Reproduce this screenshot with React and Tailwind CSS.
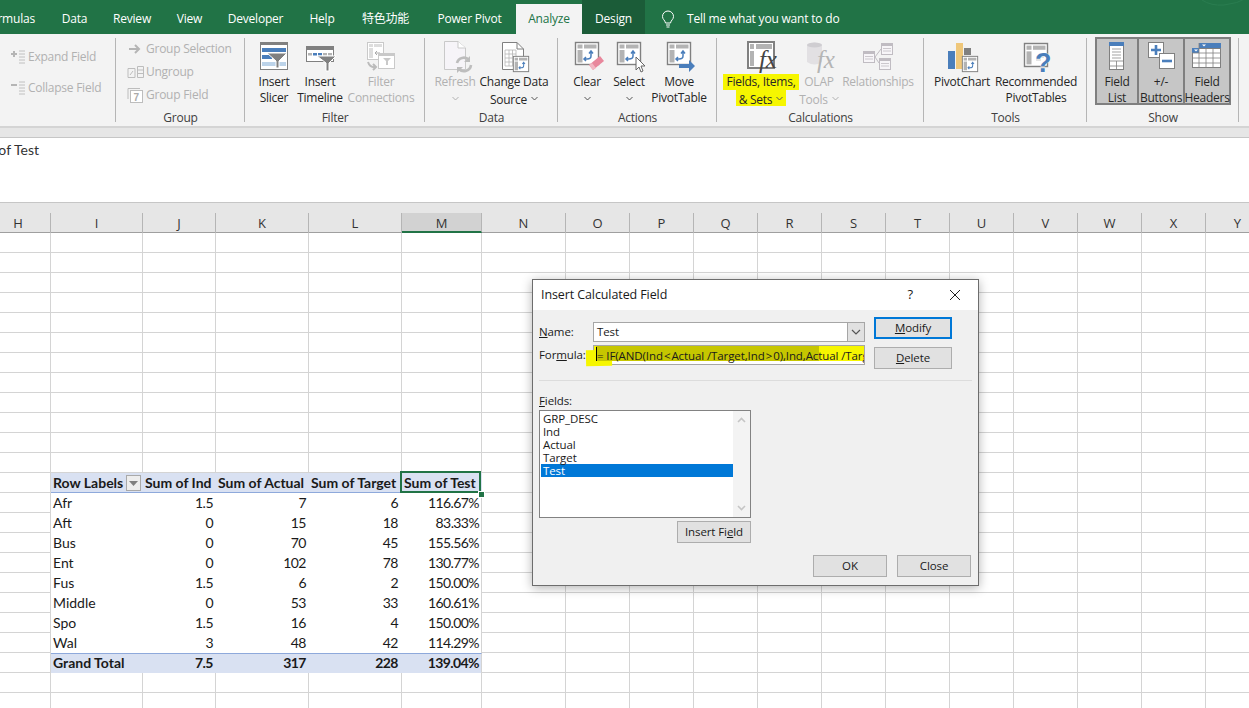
import React from "react";

const G = "#808080";
const L = "#c9c9c9";
const B = "#4a7ebb";

const Chevron = ({ c = "#666" }) => (
  <svg width="7" height="5" viewBox="0 0 7 5" className="inline-block">
    <path d="M0.5 1 L3.5 4 L6.5 1" fill="none" stroke={c} strokeWidth="1" />
  </svg>
);

// little pivot table picture with the blue swap arrows
const PT = ({ x, y, w = 24, h = 23, c = G, arrows = true }) => (
  <g transform={`translate(${x} ${y}) scale(${w / 24} ${h / 23})`}>
    <rect x="0.5" y="0.5" width="23" height="22" fill="#fff" stroke={c} strokeWidth="1.4" />
    <rect x="2.5" y="2.5" width="5" height="4" fill="#b3b3b3" />
    <rect x="9" y="2.5" width="12.5" height="4" fill="#b3b3b3" />
    <rect x="2.5" y="8" width="5" height="12.5" fill="#b3b3b3" />
    {arrows && <path d="M16 10 V14 Q16 17 12 17 H9 M14 11.5 L16 9 L18 11.5 M11 15 L9 17 L11 19" fill="none" stroke={B} strokeWidth="1.5" />}
  </g>
);

const Funnel = ({ d }) => <path d={d} fill={G} stroke="#fff" strokeWidth="1" />;

const Ico = ({ children }) => (
  <svg width="32" height="33" viewBox="0 0 32 33" className="overflow-visible">
    {children}
  </svg>
);

const SlicerIcon = () => (
  <Ico>
    <rect x="2.5" y="1.5" width="27" height="27" fill="#fff" stroke={G} />
    <rect x="2" y="1" width="28" height="3" fill={G} />
    <rect x="4" y="7" width="24" height="4" fill={B} />
    <rect x="4" y="14" width="10" height="4" fill={B} />
    <rect x="4" y="21" width="24" height="4" fill="#bcd3e9" />
    <Funnel d="M9 12 H29 L21 20 V27 H18 V20 Z" />
  </Ico>
);

const TimelineIcon = () => (
  <Ico>
    <rect x="2.5" y="5.5" width="27" height="15" fill="#fff" stroke={G} />
    <rect x="2" y="5" width="28" height="4" fill={G} />
    <rect x="4" y="12" width="4" height="2.5" fill="#b3b3b3" />
    <rect x="9" y="12" width="4" height="2.5" fill={B} />
    <rect x="14" y="12" width="4" height="2.5" fill={B} />
    <rect x="19" y="12" width="4" height="2.5" fill="#b3b3b3" />
    <rect x="24" y="12" width="4" height="2.5" fill="#b3b3b3" />
    <Funnel d="M13 15 H32 L25 22 V30 H22 V22 Z" />
  </Ico>
);

const ConnIcon = () => (
  <Ico>
    <rect x="2.5" y="1.5" width="16" height="17" fill="#fff" stroke={L} />
    <rect x="4" y="3" width="4" height="3" fill="#ddd" />
    <rect x="9" y="3" width="8" height="3" fill="#ddd" />
    <rect x="4" y="7" width="4" height="10" fill="#ddd" />
    <path d="M10 12 H15 M12 10 L10 12 L12 14" fill="none" stroke="#aaa" strokeWidth="1" />
    <rect x="13.5" y="12.5" width="16" height="15" fill="#fff" stroke={L} />
    <rect x="13" y="12" width="17" height="3" fill={L} />
    <path d="M18 17 H26 L23 20 V24 H21 V20 Z" fill={L} />
    <path d="M3 21 Q5 27 11 26 M8 23 L11 26 L8 29" fill="none" stroke="#bbb" strokeWidth="2" />
  </Ico>
);

const RefreshIcon = () => (
  <Ico>
    <path d="M5.5 0.5 H19 L26.5 7 V28.5 H5.5 Z" fill="#f6f4f8" stroke={L} />
    <path d="M19 0.5 V7 H26.5" fill="#fff" stroke={L} />
    <path d="M18 22 A7 7 0 0 1 30 19 M32 24 A7 7 0 0 1 20 28" fill="none" stroke="#bdbdbd" strokeWidth="2.6" />
    <path d="M31 15 V21 H25 Z M18 32 V26 H24 Z" fill="#bdbdbd" />
  </Ico>
);

const ChangeIcon = () => (
  <Ico>
    <path d="M4.5 1.5 H19 L25.5 8 V28.5 H4.5 Z" fill="#fff" stroke={G} />
    <path d="M19 1.5 V8 H25.5" fill="none" stroke={G} />
    <path d="M7 9 H18 V25 H7 Z M7 13 H18 M7 17 H18 M7 21 H18 M11 9 V25 M14.5 9 V25" fill="none" stroke="#b5b5b5" strokeWidth="0.8" />
    <PT x={15} y={15} w={16} h={16} />
  </Ico>
);

const ClearIcon = () => (
  <Ico>
    <PT x={4} y={1} />
    <path d="M18 24 L29 15 L33 20 L22 29 Z" fill="#e8879c" />
    <path d="M18 24 L22 29 L25 27 L21 22 Z" fill="#f2b6c2" />
  </Ico>
);

const SelectIcon = () => (
  <Ico>
    <PT x={4} y={1} />
    <path d="M23 16 V29 L26 26 L28 31 L30 30 L28 25 L32 25 Z" fill="#fff" stroke="#666" strokeWidth="1" />
  </Ico>
);

const MoveIcon = () => (
  <Ico>
    <PT x={4} y={1} />
    <path d="M16 23 H26 V19 L32 25 L26 31 V27 H16 Z" fill={B} />
  </Ico>
);

const FieldsIcon = () => (
  <Ico>
    <rect x="3" y="1" width="26" height="26" fill="#fff" stroke={G} strokeWidth="2" />
    <rect x="5" y="3" width="4" height="5" fill="#b3b3b3" />
    <rect x="11" y="3" width="16" height="5" fill="#b3b3b3" />
    <rect x="5" y="10" width="4" height="15" fill="#b3b3b3" />
    <text x="14" y="27" fontFamily="'Liberation Serif', serif" fontStyle="italic" fontSize="25" fill="#444">fx</text>
  </Ico>
);

const OlapIcon = () => (
  <Ico>
    <path d="M4 4 Q11.5 -1 19 4 V21 Q11.5 26 4 21 Z" fill="#e2e0e3" />
    <ellipse cx="11.5" cy="4" rx="7.5" ry="2.5" fill="#cfcdd1" />
    <text x="14" y="27" fontFamily="'Liberation Serif', serif" fontStyle="italic" fontSize="25" fill="#b5b5b5">fx</text>
  </Ico>
);

const RelBox = ({ x, y }) => (
  <g>
    <rect x={x + 0.5} y={y + 0.5} width="11" height="11" fill="#f7f5f8" stroke="#c0bcc2" />
    <rect x={x} y={y} width="12" height="3" fill="#c0bcc2" />
    <path d={`M${x + 2} ${y + 5.5} H${x + 10} M${x + 2} ${y + 8} H${x + 10}`} stroke="#c0bcc2" strokeWidth="0.8" />
  </g>
);

const RelIcon = () => (
  <Ico>
    <path d="M13 16 L19 8 M13 16 L17 22" stroke="#c0bcc2" fill="none" />
    <RelBox x={1} y={10} />
    <RelBox x={19} y={2} />
    <RelBox x={17} y={17} />
  </Ico>
);

const ChartIcon = () => (
  <Ico>
    <rect x="2" y="10" width="7" height="18" fill={B} />
    <rect x="10" y="2" width="7" height="26" fill="#efc77a" />
    <rect x="18" y="7" width="7" height="7" fill={G} />
    <PT x={16} y={15} w={16} h={16} />
  </Ico>
);

const RecIcon = () => (
  <Ico>
    <PT x={4} y={2} h={24} arrows={false} />
    <path d="M16 16 H24 M16 19 H21" stroke="#c9c9c9" strokeWidth="1" />
    <text x="15" y="31" fontFamily="'Liberation Sans', sans-serif" fontWeight="700" fontSize="27" fill={B} stroke="#fff" strokeWidth="0.6" paintOrder="stroke">?</text>
  </Ico>
);

const ListIcon = () => (
  <Ico>
    <rect x="8.5" y="1.5" width="14" height="27" fill="#fff" stroke={G} />
    <rect x="8" y="1" width="15" height="4" fill={B} />
    <path d="M11 8 H20 M11 11 H20 M11 14 H20 M11 17 H20" stroke="#999" strokeWidth="0.9" />
    <path d="M8 20 H23 M8 25 H23 M15.5 20 V29" stroke={G} strokeWidth="0.8" />
  </Ico>
);

const PlusMinusIcon = () => (
  <Ico>
    <rect x="3.5" y="1.5" width="15" height="15" fill="#fff" stroke={G} />
    <path d="M6 9 H16 M11 4 V14" stroke={B} strokeWidth="2.6" />
    <rect x="14.5" y="12.5" width="15" height="15" fill="#fff" stroke={G} />
    <path d="M17 20 H27" stroke={B} strokeWidth="2.6" />
  </Ico>
);

const HeadersIcon = () => (
  <Ico>
    <rect x="1.5" y="7.5" width="28" height="19" fill="#fff" stroke={G} />
    <rect x="8" y="2" width="22" height="5" fill={B} />
    <rect x="1" y="7" width="7" height="5" fill={B} />
    <path d="M8 2 V27 M15 7 V27 M22 7 V27 M1 12 H30 M1 17 H30 M1 22 H30" stroke={G} strokeWidth="0.8" />
    <path d="M11 3.5 H15 L13 5.5 Z M3 8.5 H7 L5 10.5 Z" fill="#fff" />
  </Ico>
);

const LargeBtn = ({ w, icon, lines, off, chevron, chevronLine, hi, active }) => (
  <div
    className={
      active
        ? `flex flex-col items-center h-[68px] mt-[3px] pt-[2px] bg-[#c6c6c6] border-2 border-[#7f7f7f] -mr-[2px] ${w}`
        : `flex flex-col items-center pt-[7px] ${w}`
    }
  >
    <div className="h-[33px]">{icon}</div>
    <div className={`flex flex-col items-center leading-[16px] whitespace-nowrap ${off ? "text-[#b1b1b1]" : "text-[#262626]"}`}>
      {lines.map((t, i) => (
        <span key={i} className={hi ? "bg-[#f6f600] h-[16px] px-[3px]" : "h-[16px]"}>
          {t}
          {chevron && chevronLine === i && (
            <span className="ml-[4px] align-[2px]">
              <Chevron c={off ? "#b1b1b1" : "#555"} />
            </span>
          )}
        </span>
      ))}
      {chevron && chevronLine === undefined && (
        <span className="h-[16px]">
          <Chevron c={off ? "#b1b1b1" : "#555"} />
        </span>
      )}
    </div>
  </div>
);

const Group = ({ w, label, pad = "pl-[8px]", children }) => (
  <div className={`${w} flex flex-col h-[92px] relative shrink-0`}>
    <div className={`flex h-[76px] shrink-0 ${pad}`}>{children}</div>
    <div className="h-[16px] text-center leading-[15px] text-[#404040]">{label}</div>
    <div className="absolute right-0 top-[4px] bottom-[4px] w-px bg-[#b5b5b5]" />
  </div>
);

const SmallRow = ({ icon, text, className }) => (
  <div className={`flex items-center text-[#b1b1b1] whitespace-nowrap ${className}`}>
    {icon}
    <span>{text}</span>
  </div>
);

const LineIcon = ({ plus }) => (
  <svg width="18" height="14" viewBox="0 0 18 14">
    <path d={plus ? "M1 4 H7 M4 1 V7" : "M1 4 H7"} stroke="#b5b5b5" strokeWidth="2" />
    <path d="M9 1 H15 M9 4 H15 M9 7 H15 M9 10 H15 M9 13 H15" stroke="#c0c0c0" />
  </svg>
);

const Ribbon = () => (
  <div className="flex h-[92px] bg-[#f3f3f3] text-[12px] font-['Open_Sans',sans-serif] tracking-[-0.25px]">
    <Group w="w-[116px]" pad="pl-[10px] flex-col" label="">
      <SmallRow className="mt-[15px] h-[16px]" icon={<LineIcon plus />} text="Expand Field" />
      <SmallRow className="mt-[15px] h-[16px]" icon={<LineIcon />} text="Collapse Field" />
    </Group>
    <Group w="w-[129px]" pad="pl-[11px] flex-col" label="Group">
      <SmallRow
        className="mt-[7px] h-[16px]"
        icon={
          <svg width="19" height="14" viewBox="0 0 19 14">
            <path d="M2 7 H12 M8 3 L12 7 L8 11" fill="none" stroke="#b5b5b5" strokeWidth="2" />
          </svg>
        }
        text="Group Selection"
      />
      <SmallRow
        className="mt-[7px] h-[16px]"
        icon={
          <svg width="19" height="14" viewBox="0 0 19 14">
            <path d="M1 3.5 H8 V12.5 H1 Z M3 10 L6 6 M10.5 1.5 H16.5 V12.5 H10.5 Z M10.5 5 H16.5 M10.5 8.5 H16.5" fill="none" stroke="#bdbdbd" />
          </svg>
        }
        text="Ungroup"
      />
      <SmallRow
        className="mt-[7px] h-[16px]"
        icon={
          <svg width="19" height="16" viewBox="0 0 19 16">
            <path d="M1 1.5 H13 M1 1.5 V12" fill="none" stroke="#bdbdbd" />
            <rect x="3.5" y="3.5" width="12" height="12" fill="#fff" stroke="#bdbdbd" />
            <text x="6.5" y="14" fontFamily="'Liberation Sans', sans-serif" fontWeight="700" fontSize="10" fill="#aaa">7</text>
          </svg>
        }
        text="Group Field"
      />
    </Group>
    <Group w="w-[180px]" pad="pl-[7px]" label="Filter">
      <LargeBtn w="w-[44px]" icon={<SlicerIcon />} lines={["Insert", "Slicer"]} />
      <LargeBtn w="w-[48px]" icon={<TimelineIcon />} lines={["Insert", "Timeline"]} />
      <LargeBtn w="w-[70px] ml-[2px]" off icon={<ConnIcon />} lines={["Filter", "Connections"]} />
    </Group>
    <Group w="w-[133px]" label="Data">
      <LargeBtn w="w-[44px]" off icon={<RefreshIcon />} lines={["Refresh"]} chevron />
      <LargeBtn w="w-[74px]" icon={<ChangeIcon />} lines={["Change Data", "Source"]} chevron chevronLine={1} />
    </Group>
    <Group w="w-[159px]" label="Actions">
      <LargeBtn w="w-[42px]" icon={<ClearIcon />} lines={["Clear"]} chevron />
      <LargeBtn w="w-[42px]" icon={<SelectIcon />} lines={["Select"]} chevron />
      <LargeBtn w="w-[58px]" icon={<MoveIcon />} lines={["Move", "PivotTable"]} />
    </Group>
    <Group w="w-[207px]" label="Calculations">
      <LargeBtn w="w-[72px]" hi icon={<FieldsIcon />} lines={["Fields, Items,", "& Sets"]} chevron chevronLine={1} />
      <LargeBtn w="w-[44px]" off icon={<OlapIcon />} lines={["OLAP", "Tools"]} chevron chevronLine={1} />
      <LargeBtn w="w-[74px]" off icon={<RelIcon />} lines={["Relationships"]} />
    </Group>
    <Group w="w-[163px]" label="Tools">
      <LargeBtn w="w-[60px]" icon={<ChartIcon />} lines={["PivotChart"]} />
      <LargeBtn w="w-[88px]" icon={<RecIcon />} lines={["Recommended", "PivotTables"]} />
    </Group>
    <Group w="w-[152px]" label="Show">
      <LargeBtn w="w-[44px]" active icon={<ListIcon />} lines={["Field", "List"]} />
      <LargeBtn w="w-[48px]" active icon={<PlusMinusIcon />} lines={["+/-", "Buttons"]} />
      <LargeBtn w="w-[48px]" active icon={<HeadersIcon />} lines={["Field", "Headers"]} />
    </Group>
  </div>
);

const tabs = [
  ["Data", "w-[51px]"],
  ["Review", "w-[64px]"],
  ["View", "w-[51px]"],
  ["Developer", "w-[81px]"],
  ["Help", "w-[52px]"],
  ["特色功能", "w-[75px]"],
  ["Power Pivot", "w-[93px]"],
];

const TabBar = () => (
  <div className="h-[34px] bg-[#217346] flex text-white text-[12px] font-['Open_Sans','Noto_Sans_CJK_SC',sans-serif] tracking-[-0.2px] relative overflow-hidden">
    <div className="w-[49px] flex justify-end pr-[14px] pt-[10px] leading-[18px] overflow-hidden whitespace-nowrap">Formulas</div>
    {tabs.map(([t, w]) => (
      <div key={t} className={`${w} text-center pt-[10px] leading-[18px]`}>
        {t}
      </div>
    ))}
    <div className="w-[66px] mt-[4px] bg-[#f3f3f3] text-[#217346] text-center pt-[6px] leading-[18px]">Analyze</div>
    <div className="w-[63px] bg-[#1b5c38] text-center pt-[10px] leading-[18px]">Design</div>
    <div className="flex items-start pl-[15px] pt-[10px] leading-[18px]">
      <svg width="16" height="18" viewBox="0 0 16 18" className="mr-[11px]">
        <path d="M5.5 13 C5 10 2.5 9.5 2.5 6.5 A5.5 5.5 0 0 1 13.5 6.5 C13.5 9.5 11 10 10.5 13 Z M6 15 H10 M6.5 17 H9.5" fill="none" stroke="#fff" strokeWidth="1" />
      </svg>
      <span>Tell me what you want to do</span>
    </div>
    <svg width="50" height="8" viewBox="0 0 50 8" className="absolute right-0 top-0">
      <path d="M3 0 Q12 6 25 5 Q38 4 50 -3" fill="none" stroke="#2a7d50" />
    </svg>
  </div>
);

const cols = ["H", "I", "J", "K", "L", "M", "N", "O", "P", "Q", "R", "S", "T", "U", "V", "W", "X", "Y"];
const gridCols = "grid grid-cols-[51px_92px_73px_93px_93px_80px_84px_repeat(11,64px)]";

const pivot = [
  ["Afr", "1.5", "7", "6", "116.67%"],
  ["Aft", "0", "15", "18", "83.33%"],
  ["Bus", "0", "70", "45", "155.56%"],
  ["Ent", "0", "102", "78", "130.77%"],
  ["Fus", "1.5", "6", "2", "150.00%"],
  ["Middle", "0", "53", "33", "160.61%"],
  ["Spo", "1.5", "16", "4", "150.00%"],
  ["Wal", "3", "48", "42", "114.29%"],
];

const Cell = ({ className = "" }) => <div className={`h-[20px] border-r border-b border-[#d4d4d4] ${className}`} />;

const EmptyRow = () => (
  <div className={gridCols}>
    {cols.map((c) => (
      <Cell key={c} />
    ))}
  </div>
);

// rest of the sheet to the right of the pivot
const Tail = () => cols.slice(6).map((c) => <Cell key={c} />);

const PivotHeader = () => (
  <div className={gridCols}>
    <Cell />
    <div className="col-span-5 grid grid-cols-[92px_73px_93px_93px_80px] h-[20px] bg-[#d9e1f2] border-b border-[#8ea9db] font-bold leading-[20px] text-[#1a1a1a] whitespace-nowrap">
      <div className="pl-[2px] relative">
        Row Labels
        <div className="absolute left-[75px] top-[2px] w-[15px] h-[16px] bg-[#ededed] border border-[#a9a9a9] flex items-center justify-center">
          <svg width="9" height="5" viewBox="0 0 9 5">
            <path d="M0 0 H9 L4.5 5 Z" fill="#7f7f7f" />
          </svg>
        </div>
      </div>
      <div className="pl-[2px]">Sum of Ind</div>
      <div className="pl-[2px]">Sum of Actual</div>
      <div className="pl-[2px]">Sum of Target</div>
      <div className="pl-[2px] relative">
        Sum of Test
        <div className="absolute -left-[2px] -top-[2px] w-[81px] h-[22px] border-2 border-[#217346]" />
        <div className="absolute left-[76px] top-[18px] w-[5px] h-[5px] bg-[#217346] border border-white box-content" />
      </div>
    </div>
    <Tail />
  </div>
);

const PivotRow = ({ row, total }) => (
  <div className={gridCols}>
    <Cell />
    <div
      className={`col-span-5 grid grid-cols-[92px_73px_93px_93px_80px] h-[20px] text-[#1a1a1a] border-r border-[#d4d4d4] ${
        total ? "bg-[#d9e1f2] font-bold border-t border-t-[#8ea9db] leading-[18px]" : "leading-[20px]"
      }`}
    >
      <div className="pl-[2px] whitespace-nowrap">{row[0]}</div>
      <div className="text-right pr-[3px] tracking-[-0.5px]">{row[1]}</div>
      <div className="text-right pr-[3px] tracking-[-0.5px]">{row[2]}</div>
      <div className="text-right pr-[4px] tracking-[-0.5px]">{row[3]}</div>
      <div className="text-right pr-[3px] tracking-[-0.6px]">{row[4]}</div>
    </div>
    <Tail />
  </div>
);

const Sheet = () => (
  <div className="text-[14px] font-['Lato',sans-serif]">
    <div className={`${gridCols} h-[20px] bg-[#e6e6e6] border-b border-[#9f9f9f] text-[13px] font-['Open_Sans',sans-serif] text-[#333]`}>
      {cols.map((c) => (
        <div
          key={c}
          className={`text-center leading-[20px] border-r ${c === "H" ? "pr-[14px]" : ""} ${
            c === "M" ? "bg-[#d2d2d2] border-[#b5b5b5] h-[20px] border-b-2 border-b-[#217346]" : "border-[#b5b5b5]"
          }`}
        >
          {c}
        </div>
      ))}
    </div>
    {Array.from({ length: 12 }).map((_, i) => (
      <EmptyRow key={i} />
    ))}
    <PivotHeader />
    {pivot.map((r) => (
      <PivotRow key={r[0]} row={r} />
    ))}
    <PivotRow total row={["Grand Total", "7.5", "317", "228", "139.04%"]} />
    <EmptyRow />
    <EmptyRow />
  </div>
);

const DlgBtn = ({ w = "w-[78px]", children, primary }) => (
  <div
    className={`h-[22px] ${w} flex items-center justify-center bg-[#e1e1e1] ${
      primary ? "border-2 border-[#0078d7]" : "border border-[#adadad]"
    }`}
  >
    <span>{children}</span>
  </div>
);

const fields = ["GRP_DESC", "Ind", "Actual", "Target", "Test"];

const Dialog = () => (
  <div className="absolute left-[532px] top-[279px] w-[447px] h-[307px] bg-[#f0f0f0] border border-[#6d6d6d] shadow-[0_2px_10px_rgba(0,0,0,0.3)] text-[11.5px] text-[#1a1a1a] font-['Open_Sans',sans-serif] tracking-[-0.1px]">
    <div className="h-[30px] bg-white flex items-center pl-[8px] pr-[17px] text-[12.5px]">
      <span className="flex-1">Insert Calculated Field</span>
      <span className="mr-[36px] text-[13px]">?</span>
      <svg width="12" height="12" viewBox="0 0 12 12">
        <path d="M1 1 L11 11 M11 1 L1 11" stroke="#222" strokeWidth="1" />
      </svg>
    </div>

    <div className="flex pl-[6px] pt-[7px]">
      <div className="w-[54px] flex flex-col">
        <div className="h-[20px] mt-[5px] leading-[20px]">
          <u>N</u>ame:
        </div>
        <div className="h-[20px] mt-[3px] leading-[20px] whitespace-nowrap">
          For<u>m</u>ula:
        </div>
      </div>
      <div className="w-[272px] flex flex-col mt-[5px]">
        <div className="h-[20px] bg-white border border-[#a6a6a6] flex">
          <span className="flex-1 pl-[3px] leading-[18px]">Test</span>
          <div className="w-[17px] bg-[#e1e1e1] border-l border-[#a6a6a6] flex items-center justify-center">
            <svg width="10" height="6" viewBox="0 0 10 6">
              <path d="M1 1 L5 5 L9 1" fill="none" stroke="#555" strokeWidth="1.2" />
            </svg>
          </div>
        </div>
        <div className="relative h-[20px] mt-[3px] bg-white border border-[#a6a6a6]">
          <div className="absolute inset-x-0 top-0 h-[15px] bg-[#f6f600]" />
          <div className="absolute left-[-8px] top-[4px] w-[26px] h-[16px] bg-[#f6f600] -rotate-1" />
          <div className="absolute left-[2px] top-0 w-[223px] h-[15px] bg-[#c6c600]" />
          <div className="absolute left-[2px] top-[1px] w-px h-[14px] bg-black" />
          <div className="relative overflow-hidden whitespace-nowrap pl-[3px] pr-[2px] leading-[19px]">{"= IF(AND(Ind\u200a<\u200aActual /Target,Ind\u200a>\u200a0),Ind,Actual /Target"}</div>
        </div>
      </div>
      <div className="flex flex-col ml-[9px] gap-[8px]">
        <DlgBtn primary>
          <u>M</u>odify
        </DlgBtn>
        <DlgBtn>
          <u>D</u>elete
        </DlgBtn>
      </div>
    </div>

    <div className="h-px bg-[#dcdcdc] ml-[6px] mr-[6px] mt-[11px]" />

    <div className="pl-[6px] mt-[12px] leading-[16px]">
      <u>F</u>ields:
    </div>
    <div className="ml-[6px] mt-[1px] w-[212px] h-[108px] bg-white border border-[#828282] flex">
      <div className="w-[193px] pl-[1px] pt-[1px] leading-[13px] text-[11.5px]">
        {fields.map((f) => (
          <div key={f} className={`h-[13px] pl-[2px] ${f === "Test" ? "bg-[#0078d7] text-white" : ""}`}>
            {f}
          </div>
        ))}
      </div>
      <div className="flex-1 bg-[#f3f3f3] flex flex-col justify-between items-center py-[6px]">
        <svg width="9" height="6" viewBox="0 0 9 6">
          <path d="M1 5 L4.5 1.5 L8 5" fill="none" stroke="#c5c5c5" strokeWidth="1.6" />
        </svg>
        <svg width="9" height="6" viewBox="0 0 9 6">
          <path d="M1 1 L4.5 4.5 L8 1" fill="none" stroke="#c5c5c5" strokeWidth="1.6" />
        </svg>
      </div>
    </div>
    <div className="flex w-[218px] justify-end mt-[3px]">
      <DlgBtn w="w-[74px]">
        Insert Fi<u>e</u>ld
      </DlgBtn>
    </div>
    <div className="flex justify-end gap-[10px] pr-[7px] mt-[12px]">
      <DlgBtn w="w-[74px]">OK</DlgBtn>
      <DlgBtn w="w-[74px]">Close</DlgBtn>
    </div>
  </div>
);

export default function App() {
  return (
    <div className="relative w-[1249px] h-[708px] overflow-hidden bg-white">
      <TabBar />
      <Ribbon />
      <div className="h-[11px] bg-[#e6e6e6] border-t-2 border-[#d4d4d4]" />
      <div className="h-[66px] bg-white border-y border-[#c6c6c6] text-[14px] font-['Lato',sans-serif] text-[#333] leading-[24px] overflow-hidden">
        <div className="-ml-[32px] whitespace-nowrap">Sum of Test</div>
      </div>
      <div className="h-[10px] bg-[#e6e6e6]" />
      <Sheet />
      <Dialog />
    </div>
  );
}
